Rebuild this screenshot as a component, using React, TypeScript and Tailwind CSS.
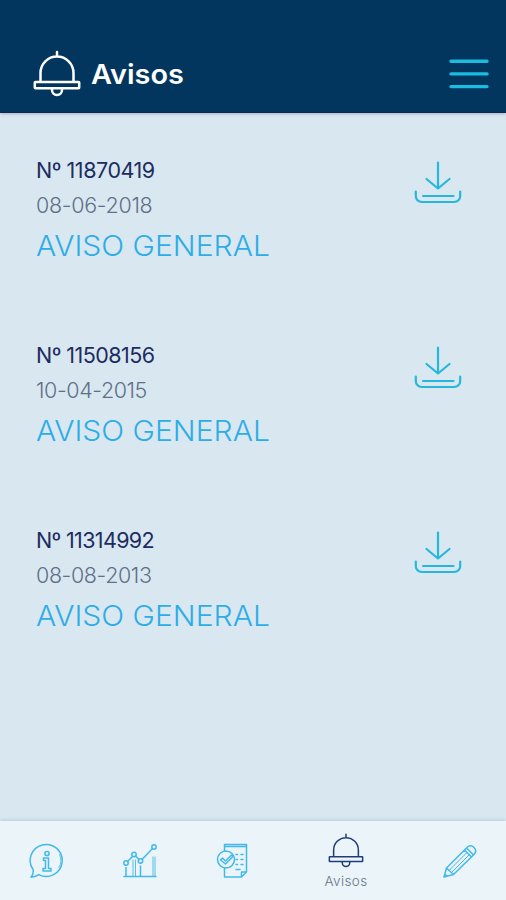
import type { ReactNode } from "react";

const notices = [
  { number: "11870419", date: "08-06-2018", numberSpacing: "tracking-[-0.45px]", dateSpacing: "tracking-[-0.3px]" },
  { number: "11508156", date: "10-04-2015", numberSpacing: "tracking-[-0.55px]", dateSpacing: "tracking-[-0.4px]" },
  { number: "11314992", date: "08-08-2013", numberSpacing: "tracking-[-0.65px]", dateSpacing: "tracking-[-0.4px]" },
];

function Bell({ className, strokeWidth }: { className: string; strokeWidth: number }) {
  return (
    <svg className={className} viewBox="0 0 48 48" fill="none" stroke="currentColor" strokeWidth={strokeWidth} strokeLinecap="round" strokeLinejoin="round">
      <path d="M24 3v4M7.5 32V24a16.5 16.5 0 0 1 33 0v8" />
      <rect x="1.8" y="33" width="44.4" height="6.2" rx="0.6" />
      <path d="M19 40v1a5 5 0 0 0 10 0v-1" />
    </svg>
  );
}

function Download() {
  return (
    <svg className="h-11 w-12" viewBox="0 0 48 44" fill="none" stroke="#26b8dc" strokeWidth="2.2" strokeLinecap="round" strokeLinejoin="round">
      <path d="M24 2.500v26M12.500 19 24 28.500 35.500 19" />
      <path d="M1.800 31.500V36a6 6 0 0 0 6 6h32.400a6 6 0 0 0 6-6v-4.500M9 36h30.500" />
    </svg>
  );
}

function NavIcon({ children }: { children: ReactNode }) {
  return (
    <svg className="size-9" viewBox="0 0 36 36" fill="none" stroke="#43b9e9" strokeWidth="1.500" strokeLinecap="round" strokeLinejoin="round">
      {children}
    </svg>
  );
}

export default function App() {
  return (
    <div className="flex h-[900px] w-[506px] flex-col overflow-hidden bg-[#d9e7f0] font-['Inter','Liberation_Sans',sans-serif]">
      <header className="z-10 flex h-[113px] shrink-0 items-start border-b border-[#132653] bg-[#02365f] pl-[33px] pr-[17px] pt-[49px] shadow-[0_1px_3px_#53668266]">
        <Bell className="size-12 text-white" strokeWidth={2.5} />
        <h1 className="ml-[10px] mt-[5px] origin-left scale-x-[1.05] text-[27.500px] leading-10 font-semibold text-white">Avisos</h1>
        <svg className="ml-auto mt-[9px] h-8 w-10" viewBox="0 0 40 32" stroke="#1bbce0" strokeWidth="3.400" strokeLinecap="round">
          <path d="M2 3.200h36M2 15.900h36M2 28.600h36" />
        </svg>
      </header>

      <main className="flex flex-1 flex-col pl-9 pr-11 pt-[39px]">
        {notices.map((n) => (
          <article key={n.number} className="flex h-[184.800px] items-start justify-between">
            <div className="whitespace-nowrap">
              <p className={`h-[35px] text-[21.500px] leading-9 text-[#202c61] ${n.numberSpacing}`}>Nº {n.number}</p>
              <p className={`h-[38px] text-[21.500px] leading-9 font-light text-[#5f7088] ${n.dateSpacing}`}>{n.date}</p>
              <p className="origin-left scale-x-[1.055] text-[28.500px] leading-[41px] font-light text-[#2cade8]">AVISO GENERAL</p>
            </div>
            <div className="mt-[8px]">
              <Download />
            </div>
          </article>
        ))}
      </main>

      <nav className="flex h-[79px] shrink-0 items-start bg-[#eaf4f9] pl-[29px] shadow-[0_-1px_3px_#b9cbd9]">
        <div className="mt-[22px] w-[93px]">
          <NavIcon>
            <path d="M2 34.300c1.800-2 2.500-4.500 2.200-7.500A16 16 0 1 1 9.700 31.600C7.500 33.200 5 34.200 2 34.300Z" />
            <circle cx="18" cy="10.500" r="2.100" />
            <path d="M14.500 15h5v10.500H22V28h-8v-2.500h2.500v-8h-2Z" />
            <path d="M30.500 11.500a14 14 0 0 1-.500 13" strokeWidth="0.800" />
          </NavIcon>
        </div>
        <div className="mt-[22px] w-[93px]">
          <NavIcon>
            <path d="M2 33.500h32M4 24.500v9M18.500 23v10" />
            <path d="M11 17v16M13.500 17v16M31 14v19M33 14v19" strokeWidth="0.900" />
            <circle cx="4" cy="20" r="2.200" />
            <circle cx="12" cy="11.500" r="2.200" />
            <circle cx="18.500" cy="18" r="2.200" />
            <circle cx="32" cy="4" r="2.200" />
            <path d="m5.500 18.500 5-5M13.500 13l3.500 3.500M20 16.500 30.500 5.500" />
          </NavIcon>
        </div>
        <div className="mt-[22px] w-[109px]">
          <NavIcon>
            <path d="M9.500 8V1.500h22V29l-5 5h-17v-9M9.500 3.500h22M26.500 34v-5h5" />
            <circle cx="11" cy="16.500" r="8.500" />
            <path d="m5.500 17 2-2 3 3 6-6 1.500 1.500-7.500 7.500ZM21 11.500h1.500M26 11.500h2M21 16.500h1.500M26 16.500h2M21 21.500h1.500M26 21.500h2M21 26.500h4" />
          </NavIcon>
        </div>
        <div className="flex w-11 flex-col items-center pt-[11px] text-[#203c78]">
          <Bell className="size-[36px]" strokeWidth={2} />
          <span className="mt-[2px] text-[13.500px] leading-[22px] font-light tracking-[0.400px] text-[#667487]">Avisos</span>
        </div>
        <div className="ml-[74px] mt-[22px]">
          <NavIcon>
            <path d="m2 34 2.500-9L25.500 4a5 5 0 0 1 7 7l-21 20.500ZM4.500 25l7 6.500M22.500 7l7 7M24.500 5l7 7M2.700 31l2.600 2.200" />
            <path d="M7 27.500 25 9.500M9.500 29.500l17.500-17.500" strokeWidth="1" />
          </NavIcon>
        </div>
      </nav>
    </div>
  );
}
